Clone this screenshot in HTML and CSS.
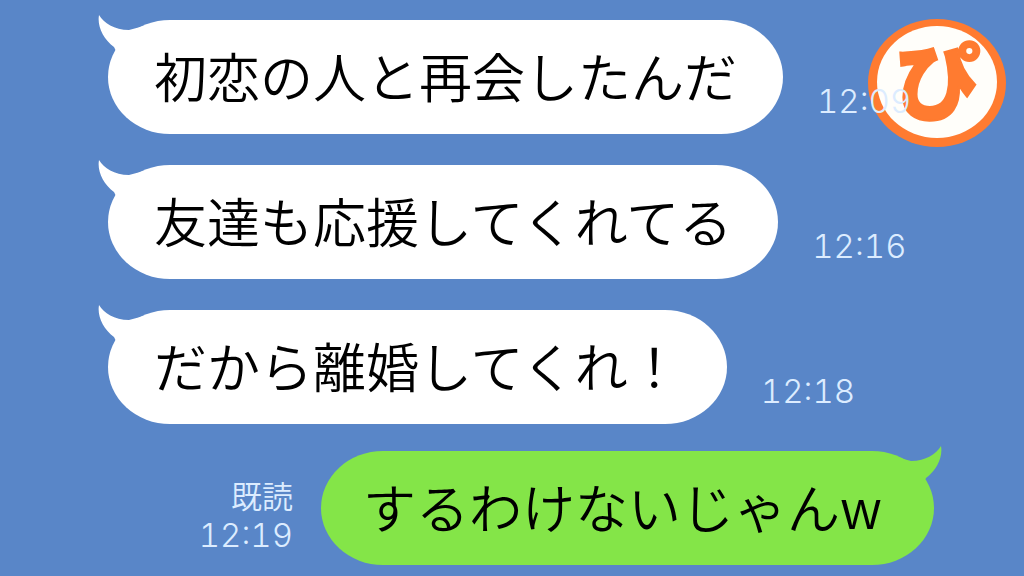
FILE: index.html
```
<!DOCTYPE html>
<html lang="ja">
<head>
    <meta charset="utf-8">
    <title>トーク</title>
    <link rel="stylesheet" href="styles.css">
</head>
<body>
<svg class="logo" viewBox="0 0 138 128" role="img" aria-label="ぴ">
    <ellipse class="logo-ring" cx="69" cy="64" rx="69" ry="64"/>
    <ellipse class="logo-face" cx="69" cy="63" rx="60" ry="56"/>
    <text class="logo-text" x="70" y="94" text-anchor="middle">ぴ</text>
</svg>

<main class="chat">
    <div class="message">
        <p class="bubble">
            <svg class="tail" viewBox="0 0 46 40" aria-hidden="true"><path d="M1 0C6 8 16 15 31 15L46 11V36H18L16 32C5 24 -1 11 1 0Z"/></svg>
            初恋の人と再会したんだ
        </p>
        <div class="meta"><time>12:09</time></div>
    </div>
    <div class="message">
        <p class="bubble">
            <svg class="tail" viewBox="0 0 46 40" aria-hidden="true"><path d="M1 0C6 8 16 15 31 15L46 11V36H18L16 32C5 24 -1 11 1 0Z"/></svg>
            友達も応援してくれてる
        </p>
        <div class="meta"><time>12:16</time></div>
    </div>
    <div class="message">
        <p class="bubble">
            <svg class="tail" viewBox="0 0 46 40" aria-hidden="true"><path d="M1 0C6 8 16 15 31 15L46 11V36H18L16 32C5 24 -1 11 1 0Z"/></svg>
            だから離婚してくれ！
        </p>
        <div class="meta"><time>12:18</time></div>
    </div>
    <div class="message message-own">
        <p class="bubble">
            <svg class="tail" viewBox="0 0 46 40" aria-hidden="true"><path d="M45 0C40 8 30 15 15 15L0 11V36H28L30 32C41 24 47 11 45 0Z"/></svg>
            するわけないじゃんw
        </p>
        <div class="meta"><span>既読</span><time>12:19</time></div>
    </div>
</main>
</body>
</html>
```
FILE: styles.css
```
* {
    box-sizing: border-box;
}

body {
    margin: 0;
    background-color: #5986c8;
    font-family: "Noto Sans CJK JP", sans-serif;
    font-weight: 350;
    color: #000;
}

.chat {
    display: flex;
    flex-direction: column;
    gap: 31px;
    padding: 20px 90px 11px 108px;
}

.message {
    display: flex;
    align-items: flex-end;
    gap: 34px;
}

.message-own {
    flex-direction: row-reverse;
    gap: 28px;
    margin-top: -4px;
}

.bubble {
    position: relative;
    margin: 0;
    padding: 15px 46px 19px;
    border-radius: 62px / 57px;
    background-color: #fff;
    font-size: 53px;
    line-height: 80px;
    white-space: nowrap;
}

.message-own .bubble {
    padding: 15px 52px 19px 42px;
    background-color: #84e548;
}

.tail {
    position: absolute;
    top: -5px;
    left: -10px;
    width: 46px;
    height: 40px;
    fill: #fff;
}

.message-own .tail {
    left: auto;
    right: -8px;
    fill: #84e548;
}

.meta {
    display: flex;
    flex-direction: column;
    align-items: flex-end;
    position: relative;
    z-index: 2;
    padding-bottom: 13px;
    color: #dcecff;
    font-size: 31px;
    line-height: 40px;
}

.meta time {
    font-family: Inter, sans-serif;
    font-size: 33px;
    font-weight: 300;
    font-variant-numeric: tabular-nums;
}

.message-own .meta {
    padding-bottom: 10px;
}

.logo {
    position: absolute;
    top: 19px;
    right: 18px;
    width: 138px;
    height: 128px;
    overflow: visible;
}

.logo-ring {
    fill: #ff7b30;
}

.logo-face {
    fill: #fffefa;
}

.logo-text {
    fill: #ff7b30;
    stroke: #ff7b30;
    stroke-width: 2px;
    font-size: 84px;
    font-weight: 900;
}
```
